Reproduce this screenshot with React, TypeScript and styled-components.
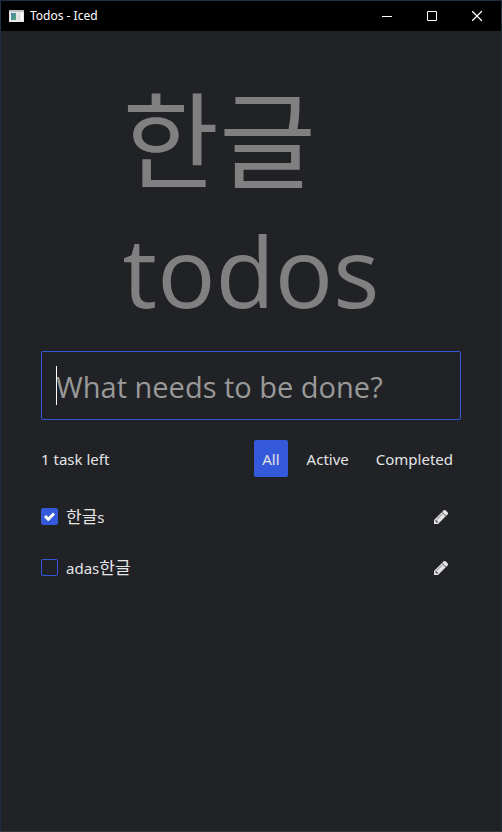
import React, { useState } from "react";
import styled, { createGlobalStyle } from "styled-components";

const GlobalStyle = createGlobalStyle`
  *, *::before, *::after { box-sizing: border-box; }
  html, body { margin: 0; background: #202225; }
  button, input { font: inherit; color: inherit; margin: 0; }
`;

const Window = styled.div`
  display: flex;
  flex-direction: column;
  min-height: 100vh;
  border: 1px solid #212d40;
  border-bottom-color: #37383b;
  background: #202225;
  color: #e4e4e5;
  font-family: "Noto Sans", "Noto Sans CJK KR", sans-serif;
  font-size: 15px;
  line-height: 21px;
`;

const TitleBar = styled.header`
  display: flex;
  align-items: center;
  height: 30px;
  padding: 0 2px 0 8px;
  background: #000;
  color: #fff;
`;

const AppIcon = styled.svg`
  width: 15px;
  height: 12px;
  margin-right: 6px;
`;

const WindowTitle = styled.span`
  flex: 1;
  font-size: 12px;
  line-height: 16px;
`;

const WindowButton = styled.button`
  display: grid;
  place-items: center;
  width: 45px;
  height: 30px;
  padding: 0;
  border: 0;
  background: none;
`;

const Glyph = styled.svg`
  width: 10px;
  height: 10px;
  fill: none;
  stroke: #fff;
`;

const Content = styled.main`
  display: flex;
  flex-direction: column;
  gap: 20px;
  width: 100%;
  max-width: 880px;
  margin: 0 auto;
  padding: 40px;
`;

const Heading = styled.h1`
  display: flex;
  flex-direction: column;
  width: min-content;
  margin: 0 auto -12px;
  color: #808080;
  font-family: "Open Sans", "Noto Sans CJK KR", sans-serif;
  font-size: 97px;
  font-weight: 400;
  line-height: 146px;
  word-break: keep-all;
`;

const Hangul = styled.span<{ $large?: boolean }>`
  font-family: "Noto Sans CJK KR", sans-serif;
  font-size: ${(p) => (p.$large ? "105px" : "17px")};
  line-height: ${(p) => (p.$large ? "126px" : "20px")};
`;

const Field = styled.div`
  position: relative;
`;

const Caret = styled.span`
  position: absolute;
  top: 15px;
  bottom: 15px;
  left: 15px;
  width: 1px;
  background: #fff;
`;

const TaskInput = styled.input`
  display: block;
  width: 100%;
  height: 69px;
  padding: 2px 14px 0;
  border: 1px solid #3459da;
  border-radius: 2px;
  outline: 0;
  background: transparent;
  font-family: "Open Sans", "Noto Sans CJK KR", sans-serif;
  font-size: 29px;
  caret-color: transparent;
  &::placeholder { color: #999; opacity: 1; }
`;

const Controls = styled.div`
  display: flex;
  align-items: center;
  justify-content: space-between;
`;

const Summary = styled.span`
  padding-top: 2px;
`;

const Filters = styled.div`
  display: flex;
  gap: 11px;
`;

const FilterButton = styled.button<{ $active: boolean }>`
  height: 37px;
  padding: 2px 8px 0;
  border: 0;
  border-radius: 2px;
  background: ${(p) => (p.$active ? "#3459da" : "transparent")};
`;

const TaskList = styled.ul`
  display: flex;
  flex-direction: column;
  gap: 12px;
  margin: 0;
  padding: 0;
  list-style: none;
`;

const TaskRow = styled.li`
  display: flex;
  align-items: center;
  height: 39px;
`;

const TaskLabel = styled.label`
  display: flex;
  flex: 1;
  align-items: center;
  gap: 8px;
`;

const CheckWrap = styled.span`
  display: grid;
  width: 17px;
  height: 17px;
  > * { grid-area: 1 / 1; }
`;

const Checkbox = styled.input`
  appearance: none;
  width: 17px;
  height: 17px;
  border: 1px solid #3459da;
  border-radius: 2px;
  &:checked { background: #3459da; }
`;

const CheckMark = styled.svg`
  place-self: center;
  width: 11px;
  height: 9px;
  fill: none;
  stroke: #fff;
  stroke-width: 3;
  pointer-events: none;
`;

const EditButton = styled.button`
  display: grid;
  place-items: center;
  width: 40px;
  height: 38px;
  padding: 0;
  border: 0;
  background: none;
`;

const Pencil = styled.svg`
  width: 14px;
  height: 14px;
  fill: #e4e4e5;
  stroke: #e4e4e5;
  stroke-width: 40;
`;

type Filter = "All" | "Active" | "Completed";
const filters: Filter[] = ["All", "Active", "Completed"];

function TaskText({ text }: { text: string }) {
  const parts = text.split(/([\uac00-\ud7a3]+)/).filter(Boolean);
  return (
    <span>
      {parts.map((part, i) =>
        /[\uac00-\ud7a3]/.test(part) ? <Hangul key={i}>{part}</Hangul> : part
      )}
    </span>
  );
}

export default function App() {
  const [filter, setFilter] = useState<Filter>("All");
  const [draft, setDraft] = useState("");
  const [tasks, setTasks] = useState([
    { id: 1, text: "한글s", done: true },
    { id: 2, text: "adas한글", done: false },
  ]);

  const left = tasks.filter((t) => !t.done).length;
  const shown = tasks.filter((t) => filter === "All" || t.done === (filter === "Completed"));
  const toggle = (id: number) =>
    setTasks(tasks.map((t) => (t.id === id ? { ...t, done: !t.done } : t)));

  return (
    <Window>
      <GlobalStyle />
      <TitleBar>
        <AppIcon viewBox="0 0 15 12" aria-hidden="true">
          <defs>
            <linearGradient id="pane" x1="0" y1="0" x2="1" y2="1">
              <stop offset="0" stopColor="#4a83b0" />
              <stop offset="1" stopColor="#57a67c" />
            </linearGradient>
          </defs>
          <path fill="#e9e9e9" d="M0 0h15v12H0z" />
          <path fill="#bfc3c5" d="M0 0h15v2H0z" />
          <path fill="url(#pane)" d="M2 3h5v7H2z" />
          <path fill="#dde1e1" d="M8 3h3v7H8z" />
          <path fill="#fff" d="M12 3h2v7h-2z" />
        </AppIcon>
        <WindowTitle>Todos - Iced</WindowTitle>
        <WindowButton aria-label="Minimize">
          <Glyph viewBox="0 0 10 10"><path d="M0 5.5h10" /></Glyph>
        </WindowButton>
        <WindowButton aria-label="Maximize">
          <Glyph viewBox="0 0 10 10"><path d="M.5.5h9v9h-9z" /></Glyph>
        </WindowButton>
        <WindowButton aria-label="Close">
          <Glyph viewBox="0 0 10 10"><path strokeWidth="1.3" d="M0 0l10 10M10 0L0 10" /></Glyph>
        </WindowButton>
      </TitleBar>
      <Content>
        <Heading>
          <Hangul $large>한글</Hangul> <span>todos</span>
        </Heading>
        <Field>
          <TaskInput
            aria-label="New task"
            placeholder="What needs to be done?"
            value={draft}
            onChange={(e) => setDraft(e.target.value)}
          />
          {draft === "" && <Caret />}
        </Field>
        <Controls>
          <Summary>{left} task left</Summary>
          <Filters>
            {filters.map((f) => (
              <FilterButton key={f} $active={f === filter} onClick={() => setFilter(f)}>
                {f}
              </FilterButton>
            ))}
          </Filters>
        </Controls>
        <TaskList>
          {shown.map((t) => (
            <TaskRow key={t.id}>
              <TaskLabel>
                <CheckWrap>
                  <Checkbox type="checkbox" checked={t.done} onChange={() => toggle(t.id)} />
                  {t.done && (
                    <CheckMark viewBox="0 0 11 9"><path d="M1 4l3.300 3.300L10 1.500" /></CheckMark>
                  )}
                </CheckWrap>
                <TaskText text={t.text} />
              </TaskLabel>
              <EditButton aria-label={`Edit ${t.text}`}>
                <Pencil viewBox="128 149 1515 1515">
                  <path d="M491 1536l91-91-235-235-91 91v107h128v128h107zm523-928q0-22-22-22-10 0-17 7l-542 542q-7 7-7 17 0 22 22 22 10 0 17-7l542-542q7-7 7-17zm-54-192l416 416-832 832h-416v-416zm683 96q0 53-37 90l-166 166-416-416 166-165q36-38 90-38 53 0 91 38l235 234q37 39 37 91z" />
                </Pencil>
              </EditButton>
            </TaskRow>
          ))}
        </TaskList>
      </Content>
    </Window>
  );
}
